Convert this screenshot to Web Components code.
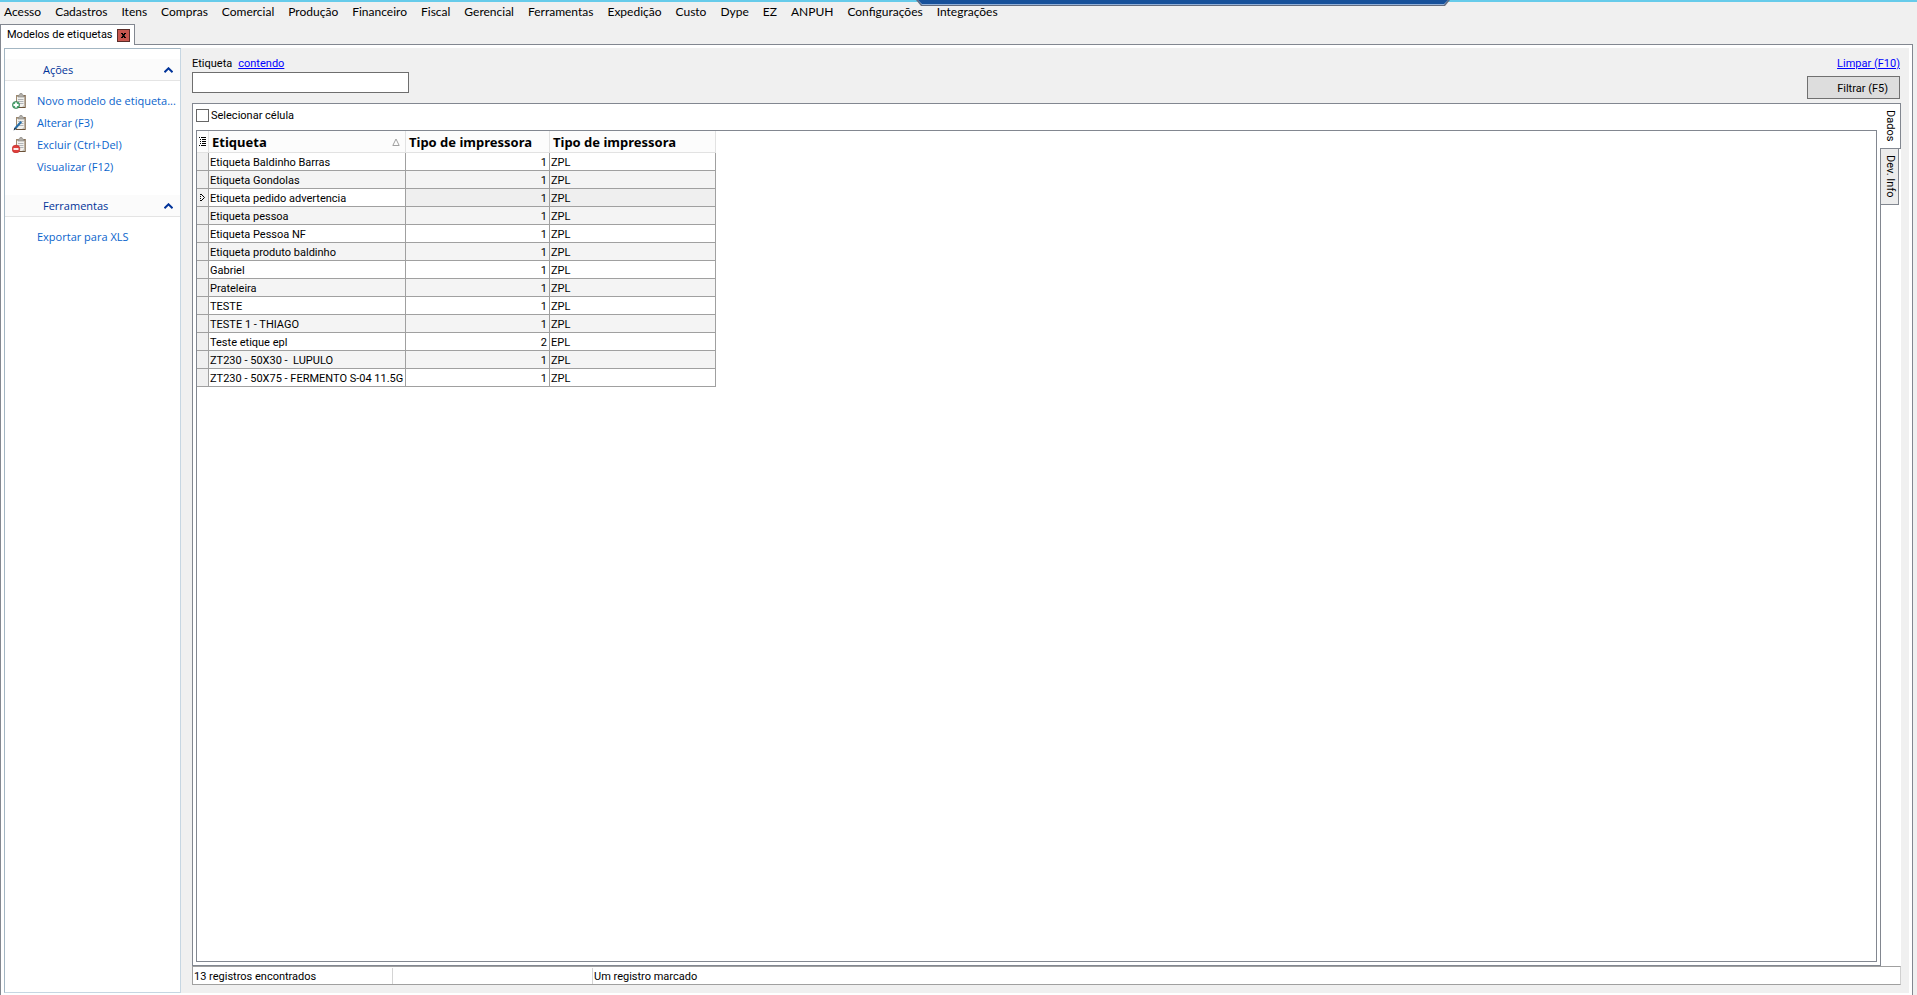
<!DOCTYPE html>
<html lang="pt-BR">
<head>
<meta charset="utf-8">
<title>Modelos de etiquetas</title>
<style>
    html, body {
        margin: 0;
        height: 100%;
    }

    body {
        --face: #f0f0f0;
        --frame: #828790;
        --grid-line: #a0a0a0;
        background: var(--face);
        color: #000;
        font: 11px/18px Roboto, "Liberation Sans", sans-serif;
    }
</style>
</head>
<body>
<erp-window>
    <menu-bar slot="menu"></menu-bar>
    <side-bar slot="side">
        <side-group heading="Ações">
            <side-action icon="add">Novo modelo de etiqueta...</side-action>
            <side-action icon="edit">Alterar (F3)</side-action>
            <side-action icon="remove">Excluir (Ctrl+Del)</side-action>
            <side-action>Visualizar (F12)</side-action>
        </side-group>
        <side-group heading="Ferramentas">
            <side-action>Exportar para XLS</side-action>
        </side-group>
    </side-bar>
    <filter-bar></filter-bar>
    <tab-panel>
        <label-grid></label-grid>
    </tab-panel>
    <status-bar>
        <span slot="count">13 registros encontrados</span>
        <span slot="marked">Um registro marcado</span>
    </status-bar>
</erp-window>

<script>
class BaseElement extends HTMLElement {
    constructor() {
        super();
        this.attachShadow({ mode: 'open' });
        this.shadowRoot.innerHTML = this.template();
    }

    template() {
        return '';
    }
}

// Window with the menu, the document tab and the page below it
class ErpWindow extends BaseElement {
    template() {
        return `
<style>
    :host {
        display: flex;
        flex-direction: column;
        min-height: 100vh;
        box-sizing: border-box;
        border-top: 2px solid #66cbea;
    }

    .connection {
        position: absolute;
        top: 0;
        left: 916px;
        width: 534px;
        height: 6px;
    }

    .tabs {
        display: flex;
        height: 21px;
        margin-right: 4px;
    }

    .tab {
        box-sizing: border-box;
        display: flex;
        align-items: center;
        gap: 4px;
        padding: 0 4px 0 6px;
        border: 1px solid var(--frame);
        border-bottom: 0;
        background: #fff;
    }

    .rest {
        box-sizing: border-box;
        flex: 1;
        border-bottom: 1px solid var(--frame);
    }

    .close {
        box-sizing: border-box;
        display: flex;
        width: 13px;
        height: 13px;
        padding: 0;
        border: 1px solid #5a2c28;
        background: #c8564e;
    }

    .page {
        flex: 1;
        display: flex;
        margin-right: 4px;
        padding: 3px 3px 2px;
        border: solid var(--frame);
        border-width: 0 1px;
        background: #fff;
    }

    .content {
        flex: 1;
        display: flex;
        flex-direction: column;
        padding: 7px 8px 8px 11px;
        background: var(--face);
    }
</style>
<svg class="connection" viewBox="0 0 534 6" preserveAspectRatio="none" aria-hidden="true">
    <path d="M0 0H534L529 6H5Z" fill="#626b7e"/>
    <path d="M2 0H532L528 5H6Z" fill="#92b0d8"/>
    <path d="M2 0H532L528 4H6Z" fill="#17519a"/>
</svg>
<slot name="menu"></slot>
<div class="tabs">
    <div class="tab">
        <span>Modelos de etiquetas</span>
        <button class="close" aria-label="Fechar">
            <svg width="11" height="11" viewBox="0 0 11 11"><path d="M3 3H5V4H6V3H8V4H7V5H6.500V6H7V7H8V8H6V7H5V8H3V7H4V6H4.500V5H4V4H3Z"/></svg>
        </button>
    </div>
    <div class="rest"></div>
</div>
<div class="page">
    <slot name="side"></slot>
    <main class="content"><slot></slot></main>
</div>
`;
    }
}

class MenuBar extends BaseElement {
    template() {
        const items = ['Acesso', 'Cadastros', 'Itens', 'Compras', 'Comercial', 'Produção',
            'Financeiro', 'Fiscal', 'Gerencial', 'Ferramentas', 'Expedição', 'Custo',
            'Dype', 'EZ', 'ANPUH', 'Configurações', 'Integrações'];
        return `
<style>
    :host {
        display: block;
    }

    nav {
        display: flex;
        gap: 14px;
        height: 22px;
        padding-left: 4px;
    }

    button {
        padding: 0 0 2px;
        border: 0;
        background: none;
        color: inherit;
        font: 12px/16px Lato, "Noto Sans", sans-serif;
    }
</style>
<nav>${items.map(item => `<button>${item}</button>`).join('')}</nav>
`;
    }
}

class SideBar extends BaseElement {
    template() {
        return `
<style>
    :host {
        display: flex;
        flex-direction: column;
        gap: 17px;
        box-sizing: border-box;
        width: 177px;
        padding-top: 10px;
        border: 1px solid #c6d6e2;
        border-top-color: #a3b6c3;
        border-left-color: #a3b6c3;
        background: #fff;
    }
</style>
<slot></slot>
`;
    }
}

class SideGroup extends BaseElement {
    template() {
        return `
<style>
    :host {
        display: block;
    }

    .head {
        box-sizing: border-box;
        display: flex;
        align-items: center;
        justify-content: space-between;
        width: 100%;
        height: 22px;
        padding: 0 7px 0 38px;
        border: 0;
        border-bottom: 1px solid #e4e4e4;
        background: #fbfbfb;
        color: #003399;
        font: 11px/16px "Open Sans", "Noto Sans", sans-serif;
    }

    .items {
        display: flex;
        flex-direction: column;
        padding-top: 9px;
    }
</style>
<button class="head">
    <span id="title"></span>
    <svg width="9" height="6" viewBox="0 0 9 6" fill="none" stroke="#003399" stroke-width="2"><path d="M0.500 5.200L4.500 1.300L8.500 5.200"/></svg>
</button>
<div class="items"><slot></slot></div>
`;
    }

    connectedCallback() {
        this.shadowRoot.querySelector('#title').textContent = this.getAttribute('heading');
    }
}

const clipboard = `
    <path d="M4 2H13.500V15H4Z" fill="#a08a6e"/>
    <path d="M12.500 2H13.500V15H4V14H12.500Z" fill="#6b5238"/>
    <path d="M5 3.500H12.500V14H5Z" fill="#f1f1ee"/>
    <path d="M6 4V2.500L7.500 2L8 .5H10L10.500 2L12 2.500V4Z" fill="#b3b0aa" stroke="#85817a" stroke-width=".6"/>
    <path d="M6 6.500H11.500M6 8.500H11.500M6 10.500H11.500" stroke="#a9adb1" stroke-width=".9"/>
    <path d="M10 14L12.500 11.500V14Z" fill="#c7c4bb"/>`;

const badges = {
    add: `<circle cx="4" cy="12" r="3.600" fill="#4fa873" stroke="#267346" stroke-width=".6"/>
    <path d="M4 9.500V14.500M1.500 12H6.500" stroke="#fff" stroke-width="1.800"/>`,
    edit: `<path d="M2 15L3 12L8.500 6L10 7.500L5 13Z" fill="#286fa8"/>
    <path d="M1.500 15.500L2.500 12.500L4.500 14Z" fill="#1c3850"/>`,
    remove: `<circle cx="4" cy="12" r="3.900" fill="#df3e3b" stroke="#b42a2a" stroke-width=".5"/>
    <path d="M1.500 12H6.500" stroke="#fff" stroke-width="1.800"/>`
};

class SideAction extends BaseElement {
    template() {
        return `
<style>
    :host {
        display: block;
    }

    button {
        display: flex;
        align-items: center;
        gap: 9px;
        width: 100%;
        height: 22px;
        padding: 0 0 0 7px;
        border: 0;
        background: none;
        color: #0a64cc;
        font: 11px/16px "Open Sans", "Noto Sans", sans-serif;
        white-space: nowrap;
    }

    svg {
        flex: none;
    }
</style>
<button>
    <svg width="16" height="16" viewBox="0 0 16 16" aria-hidden="true"></svg>
    <slot></slot>
</button>
`;
    }

    connectedCallback() {
        const icon = this.getAttribute('icon');
        if (icon) {
            this.shadowRoot.querySelector('svg').innerHTML = clipboard + badges[icon];
        }
    }
}

class FilterBar extends BaseElement {
    template() {
        return `
<style>
    :host {
        display: flex;
        justify-content: space-between;
        height: 48px;
    }

    .field, .actions {
        display: flex;
        flex-direction: column;
    }

    .caption {
        display: flex;
        gap: 6px;
        height: 17px;
    }

    a {
        color: #0000ff;
    }

    input {
        box-sizing: border-box;
        width: 217px;
        height: 21px;
        padding: 0 3px;
        border: 1px solid #6e6e6e;
        background: #fff;
        font: inherit;
    }

    .actions {
        align-items: flex-end;
        gap: 3px;
        padding-right: 1px;
    }

    button {
        box-sizing: border-box;
        width: 93px;
        height: 23px;
        padding: 2px 11px 0;
        border: 1px solid #707070;
        background: #dddddd;
        color: inherit;
        font: inherit;
        text-align: right;
    }
</style>
<div class="field">
    <div class="caption">
        <label for="etiqueta">Etiqueta</label>
        <a href="#contendo">contendo</a>
    </div>
    <input id="etiqueta" type="text">
</div>
<div class="actions">
    <a href="#limpar">Limpar (F10)</a>
    <button>Filtrar (F5)</button>
</div>
`;
    }
}

// Panel with its tabs written downwards along the right edge
class TabPanel extends BaseElement {
    template() {
        return `
<style>
    :host {
        flex: 1;
        display: flex;
        background: #fff;
    }

    .body {
        flex: 1;
        display: flex;
        flex-direction: column;
        padding: 3px;
        border: 1px solid var(--frame);
        border-right: 0;
    }

    .strip {
        display: flex;
        flex-direction: column;
        align-items: flex-start;
        width: 21px;
    }

    button {
        box-sizing: border-box;
        padding: 0;
        border: 1px solid var(--frame);
        color: inherit;
        font: inherit;
        line-height: 16px;
        writing-mode: vertical-rl;
    }

    .active {
        width: 21px;
        height: 46px;
        border-left: 0;
        background: #fff;
    }

    .other {
        width: 19px;
        height: 56px;
        border-top: 0;
        background: #ececec;
    }

    .rest {
        flex: 1;
        border-left: 1px solid var(--frame);
    }
</style>
<div class="body"><slot></slot></div>
<div class="strip" role="tablist">
    <button class="active" role="tab" aria-selected="true">Dados</button>
    <button class="other" role="tab" aria-selected="false">Dev. Info</button>
    <div class="rest"></div>
</div>
`;
    }
}

const rows = [
    ['Etiqueta Baldinho Barras', 1, 'ZPL'],
    ['Etiqueta Gondolas', 1, 'ZPL'],
    ['Etiqueta pedido advertencia', 1, 'ZPL'],
    ['Etiqueta pessoa', 1, 'ZPL'],
    ['Etiqueta Pessoa NF', 1, 'ZPL'],
    ['Etiqueta produto baldinho', 1, 'ZPL'],
    ['Gabriel', 1, 'ZPL'],
    ['Prateleira', 1, 'ZPL'],
    ['TESTE', 1, 'ZPL'],
    ['TESTE 1 - THIAGO', 1, 'ZPL'],
    ['Teste etique epl', 2, 'EPL'],
    ['ZT230 - 50X30 -  LUPULO', 1, 'ZPL'],
    ['ZT230 - 50X75 - FERMENTO S-04 11.5G', 1, 'ZPL']
];
const current = 2;

class LabelGrid extends BaseElement {
    template() {
        const marker = '<svg width="6" height="9" viewBox="0 0 6 9" fill="none" stroke="#000"><path d="M.5 1V8" stroke-dasharray="1 1"/><path d="M1 1L4.500 4.500L1 8"/></svg>';
        const body = rows.map((row, i) => `
        <tr${i === current ? ' class="current"' : ''}>
            <td class="mark">${i === current ? marker : ''}</td>
            <td>${row[0]}</td>
            <td class="num">${row[1]}</td>
            <td>${row[2]}</td>
        </tr>`).join('');
        return `
<style>
    :host {
        flex: 1;
        display: flex;
        flex-direction: column;
    }

    label {
        display: flex;
        align-items: center;
        gap: 2px;
        height: 17px;
        margin-bottom: 6px;
    }

    input {
        appearance: none;
        box-sizing: border-box;
        width: 13px;
        height: 13px;
        margin: 0;
        border: 1px solid #666;
        background: #fff;
    }

    .view {
        flex: 1;
        border: 1px solid var(--frame);
    }

    table {
        table-layout: fixed;
        width: 519px;
        border-spacing: 0;
    }

    th, td {
        box-sizing: border-box;
        height: 18px;
        padding: 2px 2px 0 1px;
        border: solid var(--grid-line);
        border-width: 0 1px 1px 0;
        line-height: 15px;
        text-align: left;
        white-space: pre;
    }

    th {
        height: 22px;
        padding: 1px 5px 0 3px;
        border-color: #e2e2e2;
        background: #fcfcfc;
        font: bold 13px/16px "Noto Sans", "Open Sans", sans-serif;
    }

    .sorted {
        display: flex;
        align-items: center;
        justify-content: space-between;
    }

    tbody tr:nth-child(even) td {
        background: #f4f4f4;
    }

    tbody tr.current td:nth-child(n+3) {
        background: #efefef;
    }

    td.num {
        text-align: right;
    }

    th.mark, td.mark {
        padding: 0;
        text-align: center;
    }

    tbody tr td.mark {
        background: #f0f0f0;
    }

    .mark svg {
        display: block;
        margin: 0 auto;
    }
</style>
<label><input type="checkbox">Selecionar célula</label>
<div class="view">
    <table>
        <colgroup><col style="width: 12px"><col style="width: 197px"><col style="width: 144px"><col></colgroup>
        <thead>
            <tr>
                <th class="mark"><svg width="7" height="9" viewBox="0 0 7 9" stroke="#000"><path d="M0 .5H1M2 .5H7M1 2.500H2M3 2.500H7M1 4.500H2M3 4.500H7M1 6.500H2M3 6.500H7M0 8.500H1M2 8.500H7"/></svg></th>
                <th><span class="sorted">Etiqueta<svg width="8" height="8" viewBox="0 0 8 8" fill="none" stroke="#a0a0a0"><path d="M4 1L.8 7.500H7.200Z"/></svg></span></th>
                <th>Tipo de impressora</th>
                <th>Tipo de impressora</th>
            </tr>
        </thead>
        <tbody>${body}</tbody>
    </table>
</div>
`;
    }
}

class StatusBar extends BaseElement {
    template() {
        return `
<style>
    :host {
        display: flex;
        box-sizing: border-box;
        height: 19px;
        border: 1px solid var(--grid-line);
        border-right-color: #d0d0d0;
        background: #fff;
    }

    div {
        box-sizing: border-box;
        width: 200px;
        margin-top: 1px;
        padding: 2px 0 0 1px;
        line-height: 14px;
        border-right: 1px solid #d4d4d4;
    }

    div:last-child {
        flex: 1;
        border: 0;
    }
</style>
<div><slot name="count"></slot></div>
<div></div>
<div><slot name="marked"></slot></div>
`;
    }
}

customElements.define('erp-window', ErpWindow);
customElements.define('menu-bar', MenuBar);
customElements.define('side-bar', SideBar);
customElements.define('side-group', SideGroup);
customElements.define('side-action', SideAction);
customElements.define('filter-bar', FilterBar);
customElements.define('tab-panel', TabPanel);
customElements.define('label-grid', LabelGrid);
customElements.define('status-bar', StatusBar);
</script>
</body>
</html>
